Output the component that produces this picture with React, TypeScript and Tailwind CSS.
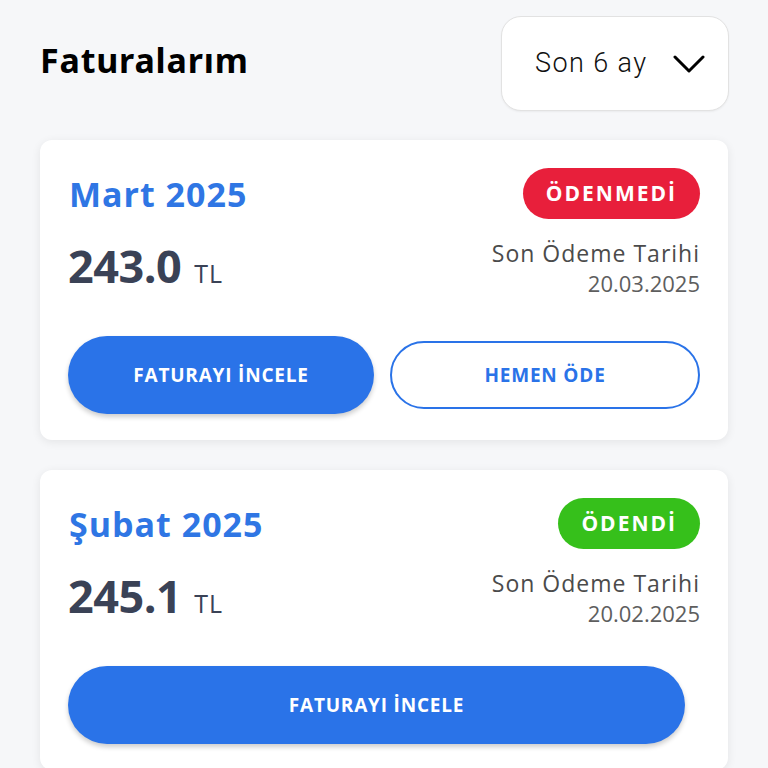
interface Invoice {
  month: string
  amount: string
  due: string
  paid: boolean
}

const invoices: Invoice[] = [
  { month: 'Mart 2025', amount: '243.0', due: '20.03.2025', paid: false },
  { month: 'Şubat 2025', amount: '245.1', due: '20.02.2025', paid: true }
]

function InvoiceCard({ inv }: { inv: Invoice }) {
  return (
    <div className="rounded-xl bg-white pt-7 pb-[26px] px-[28px] shadow-[0_2px_10px_rgba(0,0,0,0.08)]">
      {/* Title + status */}
      <div className="flex items-center justify-between">
        <h2 className="text-[34px] font-bold text-[#2f76e4] leading-none tracking-[1px] pl-[1px]">{inv.month}</h2>
        <span
          className={`h-[51px] px-[23px] rounded-full flex items-center text-[21px] font-bold text-white tracking-[2px] ${
            inv.paid ? 'bg-[#36c01b]' : 'bg-[#e81f3b]'
          }`}
        >
          {inv.paid ? 'ÖDENDİ' : 'ÖDENMEDİ'}
        </span>
      </div>

      {/* Amount + due date */}
      <div className="mt-[19px] flex items-center justify-between">
        <div className="flex items-baseline gap-[13px]">
          <span className="text-[45px] font-bold text-[#3a4256] leading-none tracking-[-0.5px]">{inv.amount}</span>
          <span className="text-[25px] text-[#3a4256] tracking-[1px]">TL</span>
        </div>
        <div className="text-right">
          <div className="text-[23px] leading-[30px] text-[#4b4b4b] tracking-[1px]">Son Ödeme Tarihi</div>
          <div className="text-[22px] leading-[30px] text-[#5e5e5e]">{inv.due}</div>
        </div>
      </div>

      {/* Actions */}
      {inv.paid ? (
        <div className="mt-[38px] mr-[15px]">
          <button className="w-full h-[78px] rounded-full bg-[#2a73e8] text-white text-[19px] font-bold tracking-[0.8px] shadow-[0_3px_5px_rgba(0,0,0,0.2)]">
            FATURAYI İNCELE
          </button>
        </div>
      ) : (
        <div className="mt-[38px] flex items-center gap-4">
          <button className="flex-1 h-[78px] rounded-full bg-[#2a73e8] text-white text-[19px] font-bold tracking-[0.8px] shadow-[0_3px_5px_rgba(0,0,0,0.2)]">
            FATURAYI İNCELE
          </button>
          <button className="flex-1 h-[68px] rounded-full border-2 border-[#2a73e8] bg-white text-[#2a73e8] text-[19px] font-bold tracking-[0.8px]">
            HEMEN ÖDE
          </button>
        </div>
      )}
    </div>
  )
}

export default function App() {
  return (
    <div className="min-h-[768px] bg-[#f6f7f9] px-10 pt-4 font-['Open_Sans',sans-serif]">
      {/* Header */}
      <div className="flex items-center justify-between">
        <h1 className="pb-[7px] text-[34px] font-bold text-black tracking-[0.8px] font-['Noto_Sans',sans-serif]">
          Faturalarım
        </h1>
        <button className="h-[95px] w-[228px] -mr-[1px] rounded-[20px] border border-[#e2e2e2] bg-white flex items-center justify-between pl-[33px] pr-[23px] shadow-[0_1px_2px_rgba(0,0,0,0.05)]">
          <span className="text-[27px] text-[#111] tracking-[1.4px] font-['Roboto',sans-serif] font-light">Son 6 ay</span>
          <svg width="32" height="20" viewBox="0 0 32 20" fill="none" stroke="black" strokeWidth="3" strokeLinecap="round" strokeLinejoin="round">
            <path d="M2 3 L16 17 L30 3" />
          </svg>
        </button>
      </div>

      <div className="mt-[29px] space-y-[30px]">
        {invoices.map((inv) => (
          <InvoiceCard key={inv.month} inv={inv} />
        ))}
      </div>
    </div>
  )
}
